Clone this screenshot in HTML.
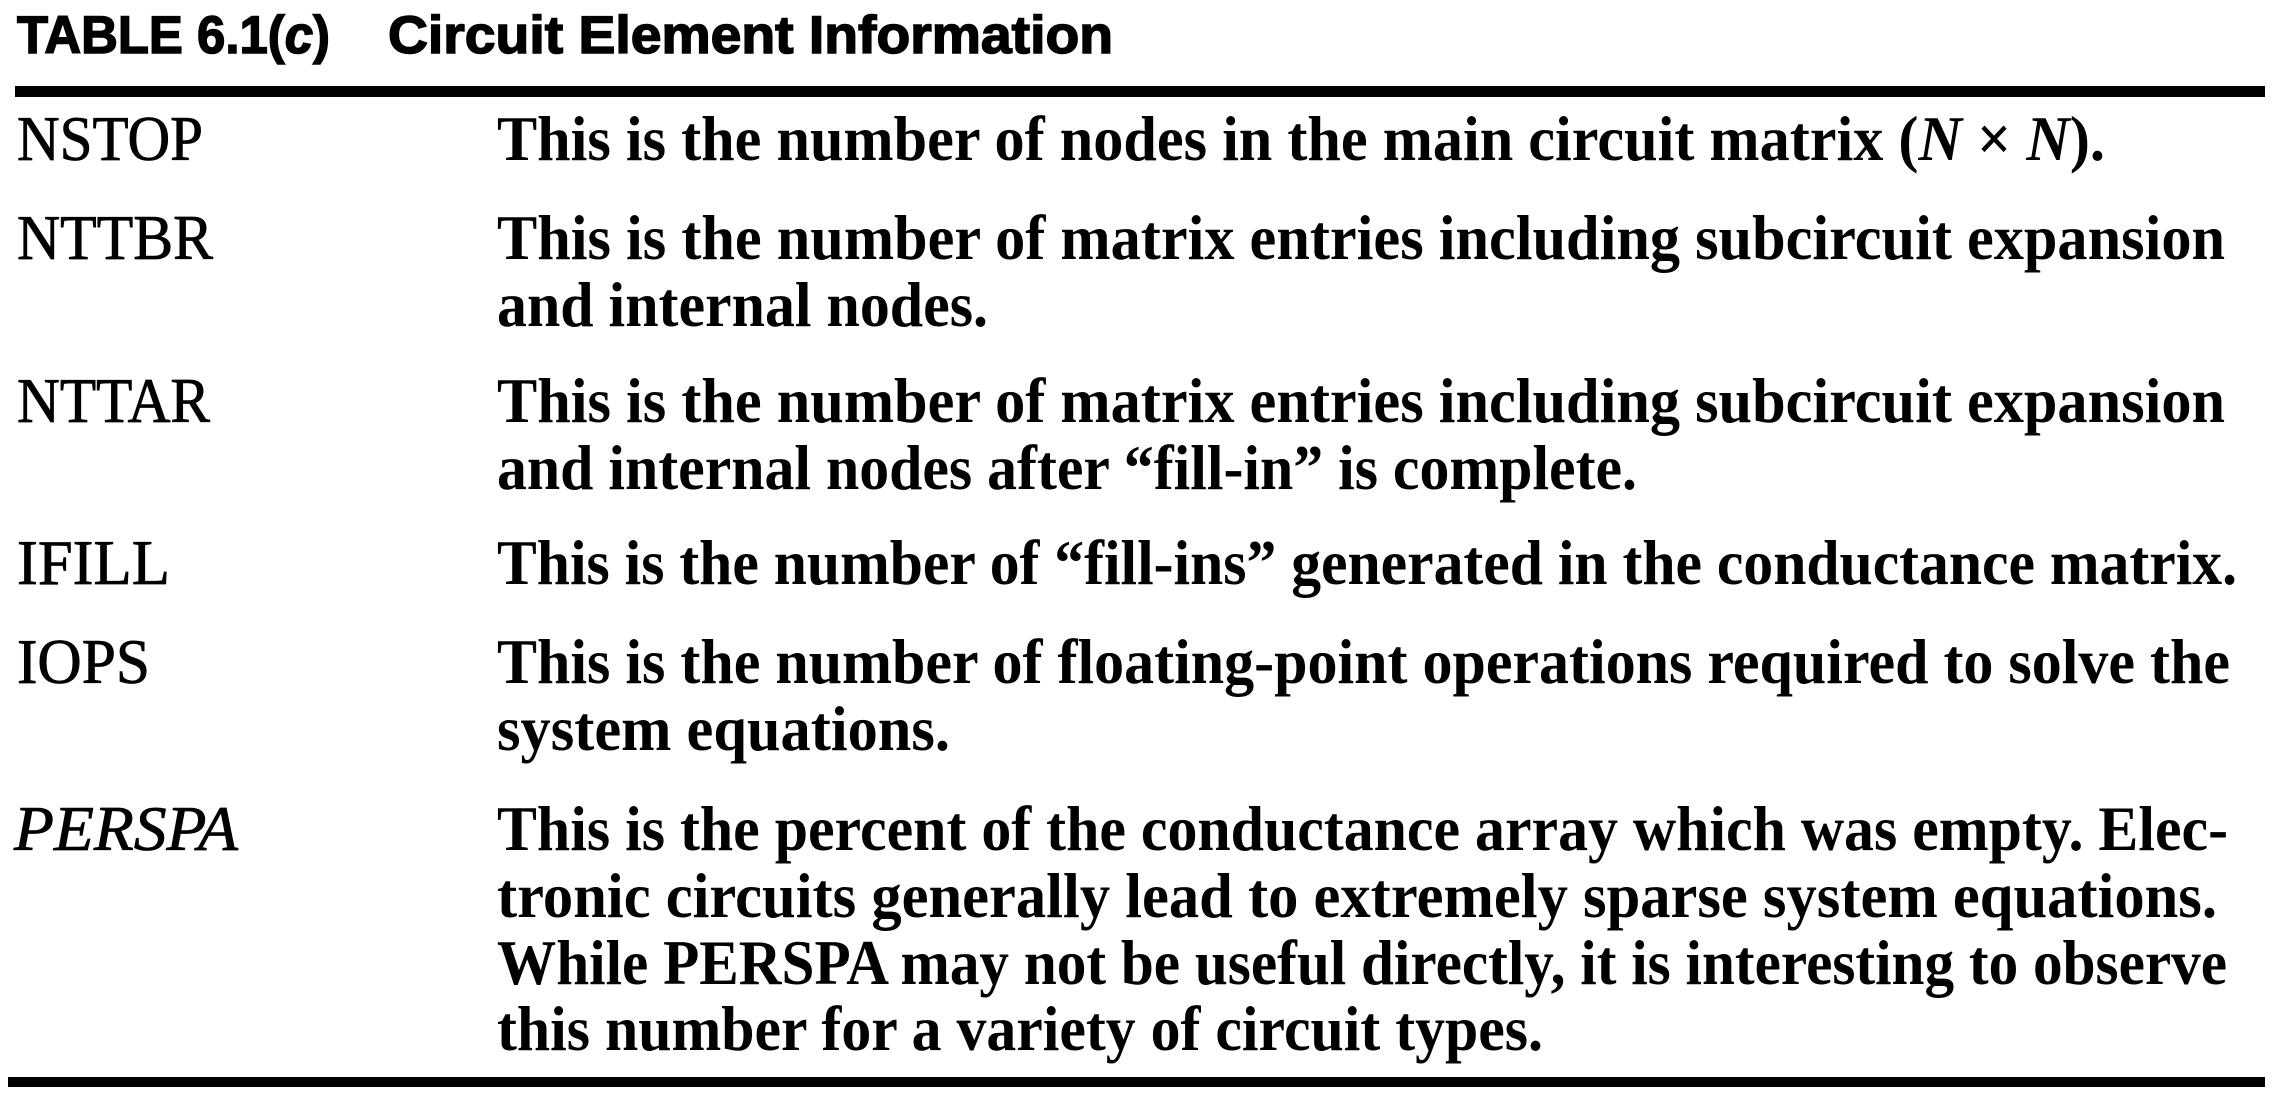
<!DOCTYPE html>
<html><head><meta charset="utf-8"><style>
html,body{margin:0;padding:0;background:#fff;width:2273px;height:1115px;overflow:hidden}
svg{display:block}
.t{font-family:"Liberation Sans",Arial,sans-serif;font-weight:bold;font-size:53px;stroke:#000;stroke-width:1.5px}
.l{font-family:"Liberation Serif",serif;font-size:63px;stroke:#000;stroke-width:0.8px}
.d{font-family:"Liberation Serif",serif;font-weight:bold;font-size:63px}
</style></head><body>
<svg width="2273" height="1115" viewBox="0 0 2273 1115" xmlns="http://www.w3.org/2000/svg">
<text class="t" x="17" y="53" textLength="313" lengthAdjust="spacingAndGlyphs">TABLE 6.1(<tspan font-style="italic">c</tspan>)</text>
<text class="t" x="388" y="53" textLength="725" lengthAdjust="spacingAndGlyphs">Circuit Element Information</text>
<rect x="15" y="86" width="2250" height="11" fill="#000"/>

<text class="l" x="17" y="160" textLength="186" lengthAdjust="spacingAndGlyphs">NSTOP</text>
<text class="d" x="497" y="160" textLength="1608" lengthAdjust="spacingAndGlyphs">This is the number of nodes in the main circuit matrix (<tspan font-style="italic">N</tspan> × <tspan font-style="italic">N</tspan>).</text>

<text class="l" x="17" y="259" textLength="196" lengthAdjust="spacingAndGlyphs">NTTBR</text>
<text class="d" x="497" y="259" textLength="1728" lengthAdjust="spacingAndGlyphs">This is the number of matrix entries including subcircuit expansion</text>
<text class="d" x="497" y="326" textLength="491" lengthAdjust="spacingAndGlyphs">and internal nodes.</text>

<text class="l" x="17" y="422" textLength="193" lengthAdjust="spacingAndGlyphs">NTTAR</text>
<text class="d" x="497" y="422" textLength="1728" lengthAdjust="spacingAndGlyphs">This is the number of matrix entries including subcircuit expansion</text>
<text class="d" x="497" y="489" textLength="1140" lengthAdjust="spacingAndGlyphs">and internal nodes after “fill-in” is complete.</text>

<text class="l" x="17" y="584" textLength="153" lengthAdjust="spacingAndGlyphs">IFILL</text>
<text class="d" x="497" y="584" textLength="1740" lengthAdjust="spacingAndGlyphs">This is the number of “fill-ins” generated in the conductance matrix.</text>

<text class="l" x="17" y="683" textLength="133" lengthAdjust="spacingAndGlyphs">IOPS</text>
<text class="d" x="497" y="683" textLength="1733" lengthAdjust="spacingAndGlyphs">This is the number of floating-point operations required to solve the</text>
<text class="d" x="497" y="750" textLength="453" lengthAdjust="spacingAndGlyphs">system equations.</text>

<text class="l" x="14" y="850" font-style="italic" textLength="224" lengthAdjust="spacingAndGlyphs">PERSPA</text>
<text class="d" x="497" y="850" textLength="1731" lengthAdjust="spacingAndGlyphs">This is the percent of the conductance array which was empty. Elec-</text>
<text class="d" x="497" y="917" textLength="1720" lengthAdjust="spacingAndGlyphs">tronic circuits generally lead to extremely sparse system equations.</text>
<text class="d" x="497" y="984" textLength="1730" lengthAdjust="spacingAndGlyphs">While PERSPA may not be useful directly, it is interesting to observe</text>
<text class="d" x="497" y="1050" textLength="1046" lengthAdjust="spacingAndGlyphs">this number for a variety of circuit types.</text>

<rect x="8" y="1077" width="2257" height="10" fill="#000"/>
</svg>
</body></html>
